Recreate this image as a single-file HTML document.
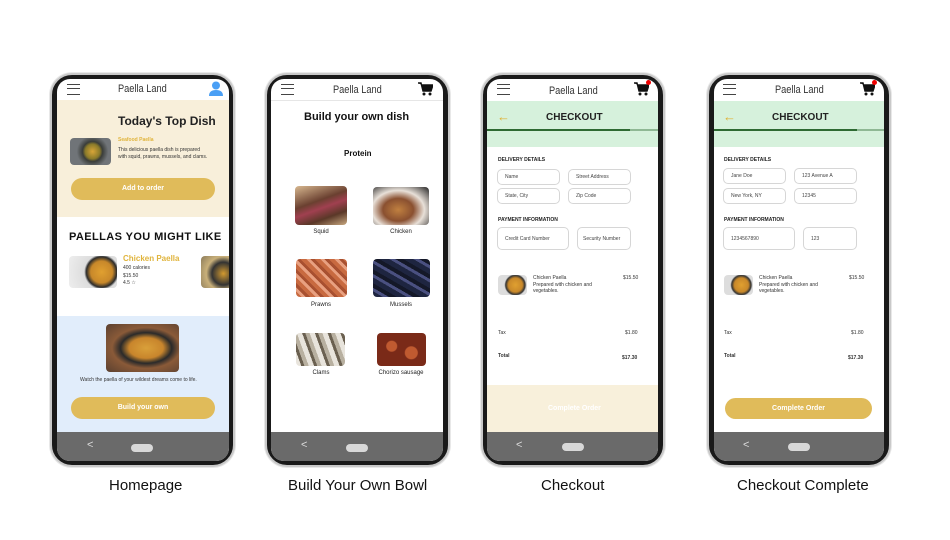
<!DOCTYPE html>
<html><head><meta charset="utf-8"><style>
*{margin:0;padding:0;box-sizing:border-box}
body{width:950px;height:540px;background:#fff;position:relative;overflow:hidden;font-family:"Liberation Sans",sans-serif;color:#222}
div,span{position:absolute}
.ph{background:#1a1a1a;border:2px solid #c9c9c9;border-radius:22px;box-shadow:0 0 0 1px #e8e8e8}
.scr{background:#fff;border-radius:13px;overflow:hidden}
.t{white-space:nowrap;line-height:1}
.logo{font-family:"Liberation Sans Narrow","Liberation Sans",sans-serif;font-size:11px;color:#333;transform:scaleX(.84);transform-origin:left center}
.ham{width:13px;height:11px;border-top:1.6px solid #444;border-bottom:1.6px solid #444}
.ham:after{content:"";position:absolute;left:0;right:0;top:3.2px;border-top:1.6px solid #444}
.nav{background:#6a6a6a}
.pill{background:#d8d8d8;border-radius:5px;width:22px;height:8px}
.btn{background:#e0bb5a;border-radius:12px;color:#fff;font-weight:bold;font-size:7px;text-align:center}
.in{border:1px solid #d6d6d6;border-radius:5px;font-size:5px;color:#444;padding-left:7px;display:flex;align-items:center}
.lbl{font-size:15px;color:#111}
.s{font-size:5px;color:#333}
.cap{font-size:6px;color:#222;text-align:center;width:60px}
.img{border-radius:4px}
</style></head><body>

<!-- PHONE 1 -->
<div class="ph" style="left:50px;top:73px;width:185px;height:394px"></div>
<div class="scr" style="left:57px;top:79px;width:172px;height:382px">
</div>
<div class="ham" style="left:67px;top:84px"></div>
<div class="t logo" style="left:118px;top:84px">Paella Land</div>
<svg style="position:absolute;left:209px;top:81px" width="14" height="15" viewBox="0 0 14 15"><circle cx="7" cy="4.5" r="4" fill="#4a9ff5"/><path d="M0 15 Q0 9 7 9 Q14 9 14 15Z" fill="#4a9ff5"/></svg>
<div style="left:57px;top:100px;width:172px;height:117px;background:#f8efda"></div>
<div class="t" style="left:118px;top:115px;font-size:12px;font-weight:bold;color:#222">Today's Top Dish</div>
<div class="img" style="left:70px;top:138px;width:41px;height:27px;background:radial-gradient(circle at 55% 50%,#d8a538 0,#8a7a2a 28%,#3a3d3a 38%,#707478 60%)"></div>
<div class="t" style="left:118px;top:138px;font-size:5px;font-weight:bold;color:#e0b43c">Seafood Paella</div>
<div class="s" style="left:118px;top:147px;line-height:6.5px;width:90px">This delicious paella dish is prepared with squid, prawns, mussels, and clams.</div>
<div class="btn" style="left:71px;top:178px;width:144px;height:22px;line-height:22px">Add to order</div>
<div class="t" style="left:69px;top:232px;font-size:11px;font-weight:bold;color:#111;letter-spacing:.4px">PAELLAS YOU MIGHT LIKE</div>
<div class="img" style="left:69px;top:256px;width:48px;height:32px;background:radial-gradient(circle at 68% 50%,#e0a030 0,#c8882a 30%,#2b2b2b 42%,#ddd 48%,#eee 100%)"></div>
<div class="t" style="left:123px;top:255px;font-size:8px;font-weight:bold;color:#e0b43c">Chicken Paella</div>
<div class="s" style="left:123px;top:265px;line-height:7.5px">400 calories<br>$15.50<br>4.5 ☆</div>
<div class="img" style="left:201px;top:256px;width:28px;height:32px;border-radius:4px 0 0 4px;background:radial-gradient(circle at 80% 55%,#d39a30 0,#333 40%,#c9b07a 60%,#8b7b5a 100%)"></div>
<div style="left:57px;top:316px;width:172px;height:116px;background:#e1edfb"></div>
<div class="img" style="left:106px;top:324px;width:73px;height:48px;background:radial-gradient(ellipse at 55% 50%,#d9a03a 0,#c8852c 30%,#2a2a2a 45%,#8a5a38 60%,#5a4030 100%)"></div>
<div class="t" style="left:80px;top:378px;font-size:5px;color:#333">Watch the paella of your wildest dreams come to life.</div>
<div class="btn" style="left:71px;top:397px;width:144px;height:22px;line-height:22px">Build your own</div>
<div class="nav" style="left:57px;top:432px;width:172px;height:29px;border-radius:0 0 13px 13px"></div>
<div class="t" style="left:87px;top:440px;color:#ddd;font-size:11px">&lt;</div>
<div class="pill" style="left:131px;top:444px"></div>
<div class="t lbl" style="left:109px;top:478px">Homepage</div>

<!-- PHONE 2 -->
<div class="ph" style="left:265px;top:73px;width:185px;height:394px"></div>
<div class="scr" style="left:271px;top:79px;width:172px;height:382px"></div>
<div class="ham" style="left:281px;top:84px"></div>
<div class="t logo" style="left:333px;top:85px">Paella Land</div>
<svg style="position:absolute;left:418px;top:82px" width="15" height="14" viewBox="0 0 15 14"><path d="M0 1h3l2 8h8l2-6H4" fill="#111" stroke="#111" stroke-width="1.4"/><circle cx="6" cy="12" r="1.5" fill="#111"/><circle cx="12" cy="12" r="1.5" fill="#111"/></svg>
<div style="left:271px;top:100px;width:172px;height:1px;background:#e6e6e6"></div>
<div class="t" style="left:304px;top:112px;font-size:11px;font-weight:bold;color:#111">Build your own dish</div>
<div class="t" style="left:344px;top:150px;font-size:8px;font-weight:bold;color:#111">Protein</div>
<div class="img" style="left:295px;top:186px;width:52px;height:39px;background:linear-gradient(160deg,#d8b890,#6a4030 40%,#a04050 55%,#5a3828 75%,#c8a880)"></div>
<div class="img" style="left:373px;top:187px;width:56px;height:38px;background:radial-gradient(ellipse at 45% 60%,#c08040 0,#8a5030 35%,#e8e0d8 60%,#222 100%)"></div>
<div class="cap t" style="left:291px;top:229px">Squid</div>
<div class="cap t" style="left:371px;top:229px">Chicken</div>
<div class="img" style="left:296px;top:259px;width:51px;height:38px;background:repeating-linear-gradient(45deg,#c86a40 0 4px,#e8a080 4px 7px,#a85030 7px 10px)"></div>
<div class="img" style="left:373px;top:259px;width:57px;height:38px;background:repeating-linear-gradient(30deg,#1e2540 0 5px,#4a5080 5px 8px,#141828 8px 12px)"></div>
<div class="cap t" style="left:291px;top:302px">Prawns</div>
<div class="cap t" style="left:371px;top:302px">Mussels</div>
<div class="img" style="left:296px;top:333px;width:49px;height:33px;background:repeating-linear-gradient(70deg,#e8e4dc 0 5px,#6a6050 5px 8px,#b8b0a0 8px 12px)"></div>
<div class="img" style="left:377px;top:333px;width:49px;height:33px;background:radial-gradient(circle at 30% 40%,#c05a30 0 5px,transparent 6px),radial-gradient(circle at 70% 60%,#c05a30 0 6px,transparent 7px),#7a2a18"></div>
<div class="cap t" style="left:291px;top:370px">Clams</div>
<div class="cap t" style="left:371px;top:370px">Chorizo sausage</div>
<div class="nav" style="left:271px;top:432px;width:172px;height:29px;border-radius:0 0 13px 13px"></div>
<div class="t" style="left:301px;top:440px;color:#ddd;font-size:11px">&lt;</div>
<div class="pill" style="left:346px;top:444px"></div>
<div class="t lbl" style="left:288px;top:478px">Build Your Own Bowl</div>

<!-- PHONE 3 & 4 -->
<div class="ph" style="left:481px;top:73px;width:184px;height:394px"></div>
<div class="scr" style="left:487px;top:79px;width:171px;height:382px"></div>
<div class="ph" style="left:707px;top:73px;width:184px;height:394px"></div>
<div class="scr" style="left:714px;top:79px;width:170px;height:382px"></div>

<!-- P3 content -->
<div class="ham" style="left:497px;top:84px"></div>
<div class="t logo" style="left:549px;top:86px">Paella Land</div>
<svg style="position:absolute;left:634px;top:82px" width="15" height="14" viewBox="0 0 15 14"><path d="M0 1h3l2 8h8l2-6H4" fill="#111" stroke="#111" stroke-width="1.4"/><circle cx="6" cy="12" r="1.5" fill="#111"/><circle cx="12" cy="12" r="1.5" fill="#111"/></svg>
<div style="left:646px;top:80px;width:5px;height:5px;border-radius:50%;background:#e00"></div>
<div style="left:487px;top:101px;width:171px;height:46px;background:#d6f1dc"></div>
<div class="t" style="left:497px;top:110px;font-size:13px;color:#e0b030;font-weight:bold">←</div>
<div class="t" style="left:546px;top:113px;font-size:10px;font-weight:bold;color:#222">CHECKOUT</div>
<div style="left:487px;top:129px;width:143px;height:2px;background:#2e6a32"></div>
<div style="left:630px;top:129px;width:28px;height:2px;background:#8fb894"></div>
<div class="t" style="left:498px;top:158px;font-size:5px;font-weight:bold">DELIVERY DETAILS</div>
<div class="in" style="left:497px;top:169px;width:63px;height:16px">Name</div>
<div class="in" style="left:568px;top:169px;width:63px;height:16px">Street Address</div>
<div class="in" style="left:497px;top:188px;width:63px;height:16px">State, City</div>
<div class="in" style="left:568px;top:188px;width:63px;height:16px">Zip Code</div>
<div class="t" style="left:498px;top:218px;font-size:5px;font-weight:bold">PAYMENT INFORMATION</div>
<div class="in" style="left:497px;top:227px;width:72px;height:23px">Credit Card Number</div>
<div class="in" style="left:577px;top:227px;width:54px;height:23px;padding-left:5px">Security Number</div>
<div class="img" style="left:498px;top:275px;width:29px;height:20px;background:radial-gradient(circle at 60% 50%,#e0a030 0,#c8882a 35%,#333 48%,#ddd 55%)"></div>
<div class="s" style="left:533px;top:275px;line-height:6.5px;width:75px">Chicken Paella<br>Prepared with chicken and vegetables.</div>
<div class="t s" style="left:623px;top:276px">$15.50</div>
<div class="t s" style="left:498px;top:331px">Tax</div>
<div class="t s" style="left:625px;top:331px">$1.80</div>
<div class="t s" style="left:498px;top:354px;font-weight:bold">Total</div>
<div class="t s" style="left:622px;top:356px;font-weight:bold">$17.30</div>
<div style="left:487px;top:385px;width:171px;height:47px;background:#f8f0db"></div>
<div class="t" style="left:548px;top:405px;font-size:7px;color:#fff;font-weight:bold">Complete Order</div>
<div class="nav" style="left:487px;top:432px;width:171px;height:29px;border-radius:0 0 13px 13px"></div>
<div class="t" style="left:516px;top:440px;color:#ddd;font-size:11px">&lt;</div>
<div class="pill" style="left:562px;top:443px"></div>
<div class="t lbl" style="left:541px;top:478px">Checkout</div>

<!-- P4 content -->
<div class="ham" style="left:723px;top:84px"></div>
<div class="t logo" style="left:775px;top:85px">Paella Land</div>
<svg style="position:absolute;left:860px;top:82px" width="15" height="14" viewBox="0 0 15 14"><path d="M0 1h3l2 8h8l2-6H4" fill="#111" stroke="#111" stroke-width="1.4"/><circle cx="6" cy="12" r="1.5" fill="#111"/><circle cx="12" cy="12" r="1.5" fill="#111"/></svg>
<div style="left:872px;top:80px;width:5px;height:5px;border-radius:50%;background:#e00"></div>
<div style="left:714px;top:101px;width:170px;height:46px;background:#d6f1dc"></div>
<div class="t" style="left:723px;top:110px;font-size:13px;color:#e0b030;font-weight:bold">←</div>
<div class="t" style="left:772px;top:113px;font-size:10px;font-weight:bold;color:#222">CHECKOUT</div>
<div style="left:714px;top:129px;width:143px;height:2px;background:#2e6a32"></div>
<div style="left:857px;top:129px;width:27px;height:2px;background:#8fb894"></div>
<div class="t" style="left:724px;top:158px;font-size:5px;font-weight:bold">DELIVERY DETAILS</div>
<div class="in" style="left:723px;top:168px;width:63px;height:16px">Jane Doe</div>
<div class="in" style="left:794px;top:168px;width:63px;height:16px">123 Avenue A</div>
<div class="in" style="left:723px;top:188px;width:63px;height:16px">New York, NY</div>
<div class="in" style="left:794px;top:188px;width:63px;height:16px">12345</div>
<div class="t" style="left:724px;top:218px;font-size:5px;font-weight:bold">PAYMENT INFORMATION</div>
<div class="in" style="left:723px;top:227px;width:72px;height:23px">1234567890</div>
<div class="in" style="left:803px;top:227px;width:54px;height:23px">123</div>
<div class="img" style="left:724px;top:275px;width:29px;height:20px;background:radial-gradient(circle at 60% 50%,#e0a030 0,#c8882a 35%,#333 48%,#ddd 55%)"></div>
<div class="s" style="left:759px;top:275px;line-height:6.5px;width:75px">Chicken Paella<br>Prepared with chicken and vegetables.</div>
<div class="t s" style="left:849px;top:276px">$15.50</div>
<div class="t s" style="left:724px;top:331px">Tax</div>
<div class="t s" style="left:851px;top:331px">$1.80</div>
<div class="t s" style="left:724px;top:354px;font-weight:bold">Total</div>
<div class="t s" style="left:848px;top:356px;font-weight:bold">$17.30</div>
<div class="btn" style="left:725px;top:398px;width:147px;height:21px;line-height:21px">Complete Order</div>
<div class="nav" style="left:714px;top:432px;width:170px;height:29px;border-radius:0 0 13px 13px"></div>
<div class="t" style="left:743px;top:440px;color:#ddd;font-size:11px">&lt;</div>
<div class="pill" style="left:788px;top:443px"></div>
<div class="t lbl" style="left:737px;top:478px">Checkout Complete</div>
</body></html>
